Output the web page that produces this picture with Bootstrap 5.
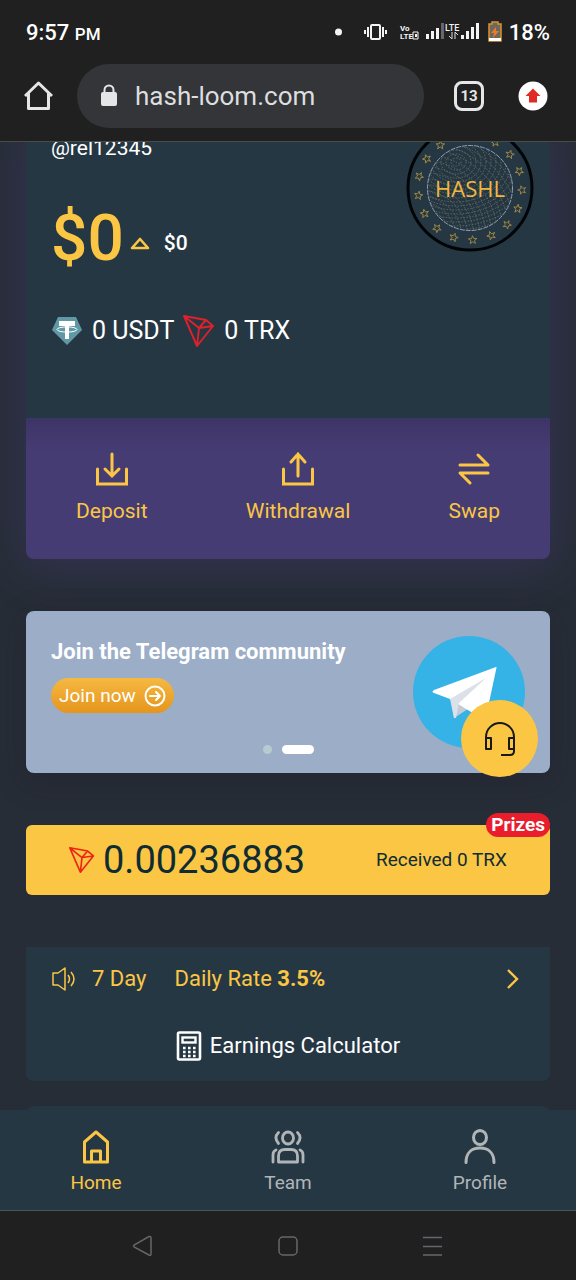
<!DOCTYPE html>
<html lang="en">
<head>
<meta charset="utf-8">
<meta name="viewport" content="width=device-width, initial-scale=1">
<title>hash-loom.com</title>
<link href="https://cdn.jsdelivr.net/npm/bootstrap@5.3.0/dist/css/bootstrap.min.css" rel="stylesheet">
<style>
:root{--gold:#fbc644;--panel:#263744;--chrome:#202020;--page:#272d37}
body{font-family:Roboto,"Liberation Sans",sans-serif;background:var(--page);color:#fff;font-size:21px;line-height:28px;overflow-x:hidden}
svg{display:block;flex:none}
a{color:inherit;text-decoration:none}
button{color:inherit}
.chrome{background:var(--chrome);border-bottom:1px solid #4b4b48;z-index:1030;padding-bottom:13px}
.statusbar{height:64px;padding:2px 26px 0}
.clock{font-size:22px;font-weight:500}
.clock small{font-size:17px}
.toolbar{height:64px;padding:0 24px}
.omnibox{height:64px;background:#333538;padding:0 22px;margin:0 30px 0 24px;min-width:0}
.omnibox input{background:none;border:0;color:#dcdedf;font-size:26px;line-height:32px;outline:0;width:0}
.tabs-btn{width:30px;height:30px;flex:none;border:3px solid #e4e6e8;border-radius:8px;background:none;font-size:15px;font-weight:700;line-height:22px;color:#e4e6e8}
.update{margin-left:32px;padding:0;border:0;background:none}
.feed{margin-top:-24px;padding:0 26px;gap:52px}
.wallet{border-radius:8px;box-shadow:0 4px 50px rgba(76,62,128,.42)}
.wallet-top{background:var(--panel);padding:16px 16px 0 25px;height:300px}
.gold{color:var(--gold)}
.balance{margin-top:39px;gap:6px}
.total{font-size:64px;line-height:76px;font-weight:500}
.delta{font-weight:500;margin-left:8px}
.coins{font-size:25px;line-height:32px;gap:9px;margin-top:38px}
.seal{margin-top:-10px}
.actions{background:linear-gradient(#3d3466,#463c74 34px);padding:33px 50px 34px;height:141px;border-radius:0 0 8px 8px}
.action{background:none;border:0;padding:0;gap:10px;line-height:28px}
.banner{background:#9badc7;border-radius:8px;padding:25px 25px 25px;box-shadow:0 8px 30px rgba(28,24,42,.3)}
.banner h2{font-size:22px;line-height:32px;font-weight:700;margin-bottom:10px}
.join{background:linear-gradient(#f5b942,#e5951c);height:35px;padding:0 8px;gap:8px;border:0;font-size:19px}
.pager{bottom:19px;left:0;right:0;gap:10px}
.pager i{height:9px;width:9px;border-radius:5px;background:#b5cbd0}
.pager i.on{width:32px;background:#fff}
.support{width:77px;height:77px;right:12px;bottom:-4px;background:var(--gold);border:0}
.prize{background:var(--gold);color:#0f2c33;border-radius:6px;height:70px;padding:0 43px}
.amount{font-size:38px;line-height:48px}
.got{font-size:19px}
.flag{top:-12px;right:0;background:#e91d2b;color:#fff;font-size:19px;font-weight:700;line-height:24px;padding:0 5px}
.rates .line{background:var(--panel);padding:0 26px}
.rates .line:first-child{height:64px;border-radius:0 0 4px 4px}
.rates .line:last-child{height:70px;border-radius:4px 4px 8px 8px}
.rates{background:#253542;font-size:22px;border-radius:2px 2px 8px 8px}
.nextcard{background:var(--panel);height:30px;border-radius:8px 8px 0 0;margin-top:-27px}
.tabbar{background:var(--panel);border-bottom:1px solid #4b5553;height:101px;padding-top:18px}
.tabbar a{color:#b0b6b8;gap:4px;flex:1;font-size:19px}
.tabbar a.here{color:var(--gold)}
.sysbar{background:var(--chrome);height:69px;padding:0 128px}
.sysbar button{background:none;border:0;padding:0}
</style>
</head>
<body class="d-flex flex-column min-vh-100">
<header class="chrome sticky-top">
  <div class="statusbar d-flex align-items-center justify-content-between">
    <div class="clock">9:57 <small>PM</small></div>
    <div class="d-flex align-items-center">
      <svg width="174" height="26" viewBox="0 0 174 26" fill="#f4f4f4" font-family="Roboto, sans-serif" font-weight="700">
        <circle cx="3.500" cy="12" r="3.500"/>
        <g fill="none" stroke="#f4f4f4" stroke-width="2"><rect x="36" y="5" width="9" height="14" rx="1"/><path d="M33 7v10M48 7v10M30 10v4M51 10v4"/></g>
        <text x="65" y="11" font-size="8">Vo</text><text x="65" y="19" font-size="8">LTE</text><path d="M78 12h5v7h-5z" fill="none" stroke="#f4f4f4"/><path d="M80 14h2v3h-2z"/>
        <path d="M91 14h3v5h-3zM96 11h3v8h-3zM101 8h3v11h-3z"/><path fill="#66666c" d="M106 3h3v16h-3z"/>
        <text x="110" y="11" font-size="9" font-weight="500">LTE</text>
        <path d="M117 12v7M114 16l3 3M120 19v-7l3 3" stroke="#ddd" fill="none"/>
        <path d="M126 15h3v4h-3zM131 11h3v8h-3zM136 7h3v12h-3zM141 3h3v16h-3z"/>
        <path d="M154 4h3V2h6v2h3v17h-12z" fill="#6d685c" stroke="#d99232" stroke-width="1.500"/><path fill="#fff" d="M154 18h12v3h-12z"/><path d="M161 7l-5 6h3l-1 5 6-7h-3z" fill="#ef7825"/>
      </svg>
      <span class="clock">18%</span>
    </div>
  </div>
  <div class="toolbar d-flex align-items-center">
    <button class="btn p-0 border-0" aria-label="Home page"><svg width="29" height="30" viewBox="0 0 29 30" fill="none" stroke="#e6e6e6" stroke-width="3" stroke-linejoin="round"><path d="M1 15 14.500 2 28 15M4.500 12v15.500h20V12"/></svg></button>
    <div class="omnibox rounded-pill d-flex align-items-center flex-grow-1">
      <svg width="20" height="24" viewBox="0 0 20 24"><rect x="2" y="8" width="16" height="14" rx="2" fill="#e4e5e7"/><path d="M5.500 9V6a4.500 4.500 0 0 1 9 0v3" fill="none" stroke="#e4e5e7" stroke-width="2"/></svg>
      <input type="text" class="flex-grow-1 ms-3 p-0" value="hash-loom.com" aria-label="Address">
    </div>
    <button class="tabs-btn p-0" aria-label="13 tabs">13</button>
    <button class="update" aria-label="Update"><svg width="36" height="30" viewBox="0 0 36 30"><circle cx="17" cy="15" r="14.500" fill="#fff"/><path d="M17 7.500 24.500 15H21v6.500h-8V15H9.500z" fill="#e02b24"/></svg></button>
  </div>
</header>

<main class="feed d-flex flex-column flex-grow-1">
  <section class="wallet">
    <div class="wallet-top d-flex justify-content-between">
      <div>
        <div class="user">@rel12345</div>
        <div class="balance d-flex align-items-center">
          <span class="total gold">$0</span>
          <svg class="mt-2" width="20" height="14" viewBox="0 0 20 14" fill="none" stroke="#fbc644" stroke-width="2.600" stroke-linejoin="round"><path d="M2 12 10 3l8 9z"/></svg>
          <span class="delta mt-2">$0</span>
        </div>
        <div class="coins d-flex align-items-center">
          <svg width="32" height="30" viewBox="0 0 32 30"><path d="M7 1h18l6 13-15 15L1 14z" fill="#6098a5"/><path d="M8 5h16v5h-6v13h-4V10H8z" fill="#fff"/><ellipse cx="16" cy="13.500" rx="10" ry="2.600" fill="none" stroke="#fff"/></svg>
          <span>0 USDT</span>
          <svg width="32" height="32" viewBox="0 0 32 32" fill="none" stroke="#e0202b" stroke-width="1.900" stroke-linejoin="round"><path d="M1 1l22 4 7 6-16 20zM1 1l15 12L14 31M16 13l7-8M16 13l14-2"/></svg>
          <span>0 TRX</span>
        </div>
      </div>
      <svg class="seal" width="128" height="128" viewBox="-64 -64 128 128">
        <defs>
          <path id="star" d="M0-5 1.300-1.600 5-1.500 2.100.7 3.100 4.200 0 2.200-3.100 4.200-2.100.7-5-1.500-1.300-1.600z" transform="translate(0 52) scale(.85)" fill="none" stroke="#a58d44"/>
          <clipPath id="disc"><circle r="42"/></clipPath>
        </defs>
        <circle r="62" fill="none" stroke="#020507" stroke-width="3"/>
        <g id="stars"></g>
        <g clip-path="url(#disc)" fill="none" stroke="#8d9074" stroke-width=".8" stroke-dasharray="1.500 1.500" opacity=".7">
          <g id="mesh"></g>
        </g>
        <circle r="42.500" fill="none" stroke="#93a0b4" stroke-dasharray="5 1"/>
        <text y="9" text-anchor="middle" font-family="'Open Sans', sans-serif" font-size="22" font-weight="500" fill="#efb73e">HASHL</text>
      </svg>
    </div>
    <div class="actions d-flex justify-content-between align-items-start gold">
      <button class="action gold d-flex flex-column align-items-center">
        <svg width="36" height="36" viewBox="0 0 36 36" fill="none" stroke="currentColor" stroke-width="3" stroke-linecap="round"><path d="M3.500 18v15h29V18M18 3v22M11 18l7 7 7-7"/></svg>Deposit</button>
      <button class="action gold d-flex flex-column align-items-center">
        <svg width="36" height="36" viewBox="0 0 36 36" fill="none" stroke="currentColor" stroke-width="3" stroke-linecap="round"><path d="M3.500 18v15h29V18M18 25V3M11 11l7-8 7 8"/></svg>Withdrawal</button>
      <button class="action gold d-flex flex-column align-items-center">
        <svg width="36" height="36" viewBox="0 0 36 36" fill="none" stroke="currentColor" stroke-width="3" stroke-linecap="round" stroke-linejoin="round"><path d="M4 14h28L22 4M32 22H4l10 10"/></svg>Swap</button>
    </div>
  </section>

  <section class="banner position-relative d-flex justify-content-between align-items-start">
    <div>
      <h2>Join the Telegram community</h2>
      <button class="join rounded-pill d-flex align-items-center text-white">Join now
        <svg width="22" height="22" viewBox="0 0 22 22" fill="none" stroke="#fff" stroke-width="2" stroke-linecap="round" stroke-linejoin="round"><circle cx="11" cy="11" r="9.500"/><path d="M6 11h10M12 7l4 4-4 4"/></svg></button>
    </div>
    <svg width="112" height="112" viewBox="0 0 112 112"><circle cx="56" cy="56" r="56" fill="#35b2e6"/><path d="M38 63 41 82 58 71z" fill="#c3cbd7"/><path d="M83 31 21 54q-3 2 0 3l16 6 26 16q8 5 11-3l9-42q1-4 0-3z" fill="#fff"/><path d="M37 63 73 42 46 67 43 82 41 82z" fill="#dce0e8"/></svg>
    <div class="pager position-absolute d-flex justify-content-center"><i></i><i class="on"></i></div>
    <button class="support rounded-circle position-absolute d-flex align-items-center justify-content-center p-0" aria-label="Support">
      <svg width="34" height="38" viewBox="0 0 34 38" fill="none" stroke="#171a18" stroke-width="2" stroke-linejoin="round"><path d="M3 18v-1a14 14 0 0 1 28 0v14q0 4-4 4h-9"/><rect x="3" y="18" width="5" height="11"/><rect x="26" y="18" width="5" height="11"/></svg></button>
  </section>

  <section class="prize position-relative d-flex align-items-center justify-content-between">
    <div class="d-flex align-items-center gap-2">
      <svg width="26" height="28" viewBox="0 0 32 32" fill="none" stroke="#ec2415" stroke-width="2" stroke-linejoin="round"><path d="M1 1l22 4 7 6-16 20zM1 1l15 12L14 31M16 13l7-8M16 13l14-2"/></svg>
      <span class="amount">0.00236883</span>
    </div>
    <span class="got">Received 0 TRX</span>
    <span class="flag rounded-pill position-absolute">Prizes</span>
  </section>

  <section class="rates">
    <a href="#rates" class="line gold d-flex align-items-center">
      <svg width="24" height="26" viewBox="0 0 24 26" fill="none" stroke="currentColor" stroke-width="1.500" stroke-linejoin="round"><path d="M1 7h5l7-5v22l-7-5H1zM16 9q3 4 0 8M19 6q6 7 0 14"/></svg>
      <span class="ms-3">7 Day</span><span class="ms-4 ps-1">Daily Rate <b>3.5%</b></span>
      <svg class="ms-auto me-1" width="14" height="22" viewBox="0 0 14 22" fill="none" stroke="currentColor" stroke-width="2.400"><path d="M2 2l9 9-9 9"/></svg>
    </a>
    <a href="#calculator" class="line d-flex align-items-center justify-content-center gap-2">
      <svg width="26" height="30" viewBox="0 0 26 30"><rect x="2" y="1.500" width="22" height="27" rx="1.500" fill="none" stroke="#fff" stroke-width="2.600"/><rect x="6.500" y="6.500" width="13" height="5" fill="none" stroke="#fff" stroke-width="2.400"/><path d="M7 17h13M7 21h13M7 25h13" stroke="#fff" stroke-width="2.600" stroke-dasharray="2.600 2.400"/></svg>
      Earnings Calculator</a>
  </section>
  <div class="nextcard"></div>
</main>

<footer class="fixed-bottom">
  <nav class="tabbar d-flex">
    <a href="#home" class="here d-flex flex-column align-items-center"><svg width="36" height="37" viewBox="0 0 36 37" fill="none" stroke="currentColor" stroke-width="3" stroke-linejoin="round"><path d="M6.500 14 18 4l11.500 10v20h-23zM13.500 34V23h9v11"/></svg>Home</a>
    <a href="#team" class="d-flex flex-column align-items-center"><svg width="36" height="37" viewBox="0 0 36 37" fill="none" stroke="currentColor" stroke-width="2.800" stroke-linecap="round" stroke-linejoin="round"><ellipse cx="18" cy="10" rx="5.500" ry="6"/><path d="M8.500 34v-6q0-6.500 6.500-6.500h6q6.500 0 6.500 6.500v6zM8.500 4.500q-5 5 0 11M27.500 4.500q5 5 0 11M6 22q-3 1-3 5v7M30 22q3 1 3 5v7"/></svg>Team</a>
    <a href="#profile" class="d-flex flex-column align-items-center"><svg width="36" height="37" viewBox="0 0 36 37" fill="none" stroke="currentColor" stroke-width="3" stroke-linecap="round"><ellipse cx="18" cy="9.500" rx="6.500" ry="7"/><path d="M4 34.500C4 25 9.500 20 18 20s14 5 14 14.500"/></svg>Profile</a>
  </nav>
  <div class="sysbar d-flex align-items-center justify-content-between">
    <button aria-label="Back"><svg width="32" height="22" viewBox="0 0 32 22" fill="none" stroke="#66666c" stroke-width="1.500"><path d="M22 1.500q1 0 1 1.500v16q0 2-2 1L6 12q-1-1 0-2L21 1.500z"/></svg></button>
    <button aria-label="Home"><svg width="20" height="20" viewBox="0 0 20 20" fill="none" stroke="#66666c" stroke-width="1.500"><rect x="1" y="1" width="18" height="18" rx="4"/></svg></button>
    <button aria-label="Recents"><svg width="32" height="20" viewBox="0 0 32 20" stroke="#66666c" stroke-width="1.500"><path d="M7 1.500h19M7 10.500h19M7 19h19"/></svg></button>
  </div>
</footer>
<script src="https://cdn.jsdelivr.net/npm/bootstrap@5.3.0/dist/js/bootstrap.bundle.min.js"></script>
<script>
  // Ring of stars and the dotted globe of the seal
  let stars = '', mesh = '';
  for (let i = 0; i < 17; i++) stars += `<use href="#star" transform="rotate(${i * 360 / 17 - 3})"/>`;
  for (let r = 5; r < 110; r += 5) mesh += `<ellipse cx="-14" cy="-26" rx="${r}" ry="${r * 0.8}"/>`;
  for (let r = 30; r < 120; r += 6) mesh += `<circle cx="-50" cy="50" r="${r}"/>`;
  document.getElementById('stars').innerHTML = stars;
  document.getElementById('mesh').innerHTML = mesh;
</script>
</body>
</html>
